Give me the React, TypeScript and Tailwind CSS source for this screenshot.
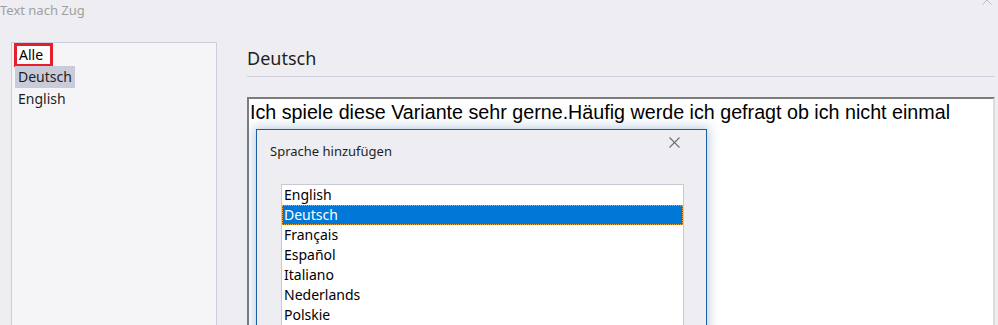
import React from 'react'

const sprachen = ['English', 'Deutsch', 'Français', 'Español', 'Italiano', 'Nederlands', 'Polskie']

function CloseIcon({ className }: { className?: string }) {
  return (
    <svg viewBox="0 0 11 11" className={className} fill="none" stroke="currentColor" strokeWidth={1.1}>
      <path d="M0.5 0.5 L10.5 10.5 M10.5 0.5 L0.5 10.5" />
    </svg>
  )
}

function SprachDialog() {
  return (
    <div className="absolute left-[256px] top-[129px] w-[451px] h-[240px] border border-[#1d5e9e] bg-[#eeeef2] shadow-[0_0_10px_2px_rgba(40,100,160,0.3)]">
      <CloseIcon className="absolute right-[26px] top-[7px] w-[11px] h-[11px] text-[#6e6e6e]" />
      <div className="pl-[13px] pt-[12px] text-[13px] leading-[18px] text-[#1e1e1e]">Sprache hinzufügen</div>
      <div className="ml-[24px] mt-[24px] w-[403px] h-[200px] border border-[#c9c9d3] bg-white overflow-hidden">
        {sprachen.map((s) => (
          <div
            key={s}
            className={
              s === 'Deutsch'
                ? 'h-[20px] pl-[1px] text-[14px] leading-[18px] bg-[#0078d7] text-white border border-dotted border-[#e8a040]'
                : 'h-[20px] pl-[2px] text-[14px] leading-[19px] text-black'
            }
          >
            {s}
          </div>
        ))}
      </div>
    </div>
  )
}

export default function App() {
  return (
    <div
      className="relative w-[998px] h-[325px] overflow-hidden bg-[#eeeef2]"
      style={{ fontFamily: '"Noto Sans", "Open Sans", sans-serif' }}
    >
      <div className="flex justify-between h-[42px]">
        <div className="pt-[1px] text-[13px] leading-[18px] text-[#a0a0a0]">Text nach Zug</div>
        <CloseIcon className="-mt-[5px] mr-[6px] w-[10px] h-[10px] text-[#bcbcbc]" />
      </div>

      <div className="flex pl-[11px] gap-[30px]">
        {/* Sprachliste links */}
        <div className="w-[206px] h-[300px] border border-[#cdcde0] bg-[#f5f5f8] text-[14px] text-[#1e1e1e]">
          <div className="ml-[2px] inline-block h-[24px] border-[3px] border-[#e51f2d] bg-white pl-[2px] pr-[7px] leading-[18px] text-black">
            Alle
          </div>
          <div className="-mt-[1px]">
            <span className="ml-[3px] inline-block h-[22px] bg-[#c9cbd9] px-[3px] leading-[22px]">Deutsch</span>
          </div>
          <div className="h-[22px] pl-[6px] leading-[22px]">English</div>
        </div>

        {/* Inhalt rechts */}
        <div className="w-[748px]">
          <div className="mt-[4px] h-[24px] text-[18px] leading-[24px] text-[#1e1e1e]">Deutsch</div>
          <div className="mt-[6px] h-px bg-[#d0d0e2]" />
          <div
            className="mt-[20px] h-[260px] border-2 border-t-[#7c7c7c] border-l-[#7c7c7c] border-r-[#dcdcdc] border-b-[#dcdcdc] bg-white pl-[1px] pt-[2px] text-[19.7px] leading-[22px] text-black"
            style={{ fontFamily: '"Liberation Sans", Arial, sans-serif' }}
          >
            Ich spiele diese Variante sehr gerne.Häufig werde ich gefragt ob ich nicht einmal
          </div>
        </div>
      </div>

      <SprachDialog />
    </div>
  )
}
